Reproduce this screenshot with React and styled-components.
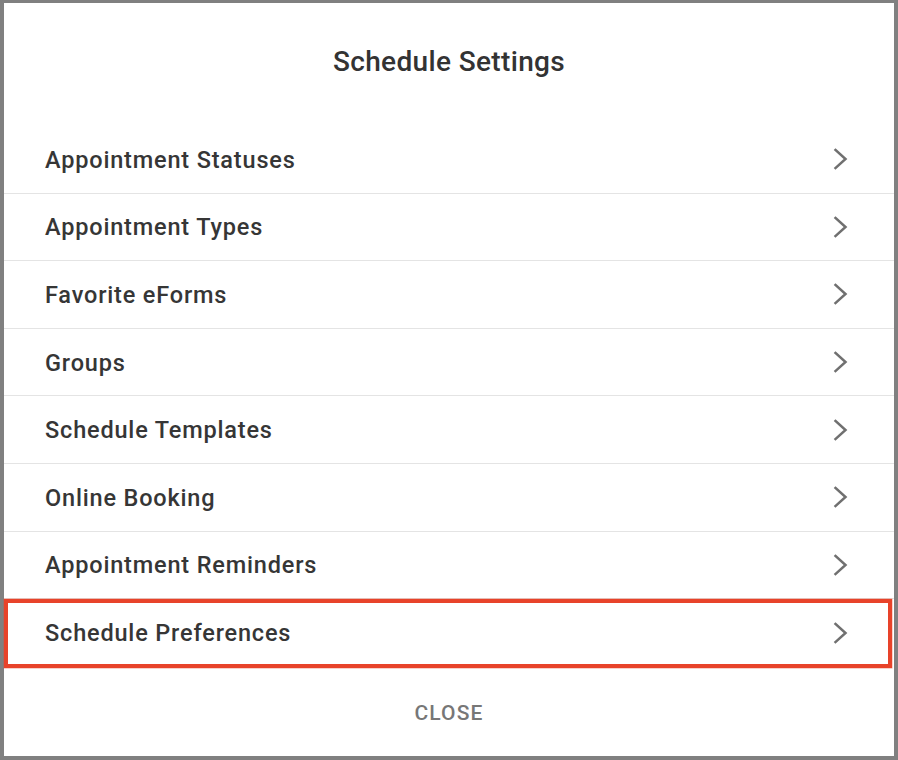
import React from "react";
import styled, { createGlobalStyle } from "styled-components";

const Global = createGlobalStyle`
  html, body { margin: 0; padding: 0; background: #ffffff; }
  body { font-family: Roboto, "Noto Sans", "Liberation Sans", sans-serif; }
`;

const Dialog = styled.div`
  box-sizing: border-box;
  width: 898px;
  height: 760px;
  background: #ffffff;
  border: 4px solid #808080;
  border-top-width: 3px;
  display: flex;
  flex-direction: column;
`;

const Header = styled.div`
  height: 123px;
  display: flex;
  justify-content: center;
  padding-top: 43px;
  box-sizing: border-box;
`;

const Title = styled.h1`
  margin: 0;
  font-size: 28px;
  line-height: 32px;
  font-weight: 500;
  color: #333333;
  letter-spacing: 0.35px;
`;

const List = styled.div`
  display: flex;
  flex-direction: column;
`;

const Row = styled.div`
  position: relative;
  box-sizing: border-box;
  height: 67.6px;
  display: flex;
  align-items: center;
  justify-content: space-between;
  padding: 0 45px 0 41px;
  border-bottom: ${(p) => (p.$last ? "none" : "1px solid #e4e4e4")};

  ${(p) =>
    p.$highlight &&
    `
    &::after {
      content: "";
      position: absolute;
      left: 0;
      right: 2px;
      top: -0.5px;
      bottom: -1px;
      border: 4px solid #e8432a;
      box-shadow: 0 0 0 0.5px rgba(232, 67, 42, 0.5);
      pointer-events: none;
    }
  `}
`;

const Label = styled.span`
  font-size: 23.5px;
  font-weight: 500;
  color: #363636;
  letter-spacing: 0.82px;
  margin-top: 1px;
`;

const Footer = styled.div`
  flex: 1;
  display: flex;
  align-items: center;
  justify-content: center;
  padding-top: 4px;
`;

const CloseButton = styled.button`
  border: none;
  background: transparent;
  font-family: Roboto, "Noto Sans", "Liberation Sans", sans-serif;
  font-size: 21px;
  font-weight: 500;
  color: #777777;
  letter-spacing: 1.1px;
  padding: 8px 12px;
  cursor: pointer;
`;

const Chevron = () => (
  <svg width="16" height="22" viewBox="0 0 16 22" fill="none">
    <polyline
      points="2.5,2 12.5,11 2.5,20"
      stroke="#707070"
      strokeWidth="2.5"
      strokeLinecap="square"
      strokeLinejoin="miter"
      fill="none"
    />
  </svg>
);

const items = [
  "Appointment Statuses",
  "Appointment Types",
  "Favorite eForms",
  "Groups",
  "Schedule Templates",
  "Online Booking",
  "Appointment Reminders",
  "Schedule Preferences",
];

export default function App() {
  return (
    <>
      <Global />
      <Dialog>
        <Header>
          <Title>Schedule Settings</Title>
        </Header>
        <List>
          {items.map((it, i) => (
            <Row
              key={it}
              $highlight={i === items.length - 1}
              $last={i === items.length - 1}
            >
              <Label>{it}</Label>
              <Chevron />
            </Row>
          ))}
        </List>
        <Footer>
          <CloseButton>CLOSE</CloseButton>
        </Footer>
      </Dialog>
    </>
  );
}
